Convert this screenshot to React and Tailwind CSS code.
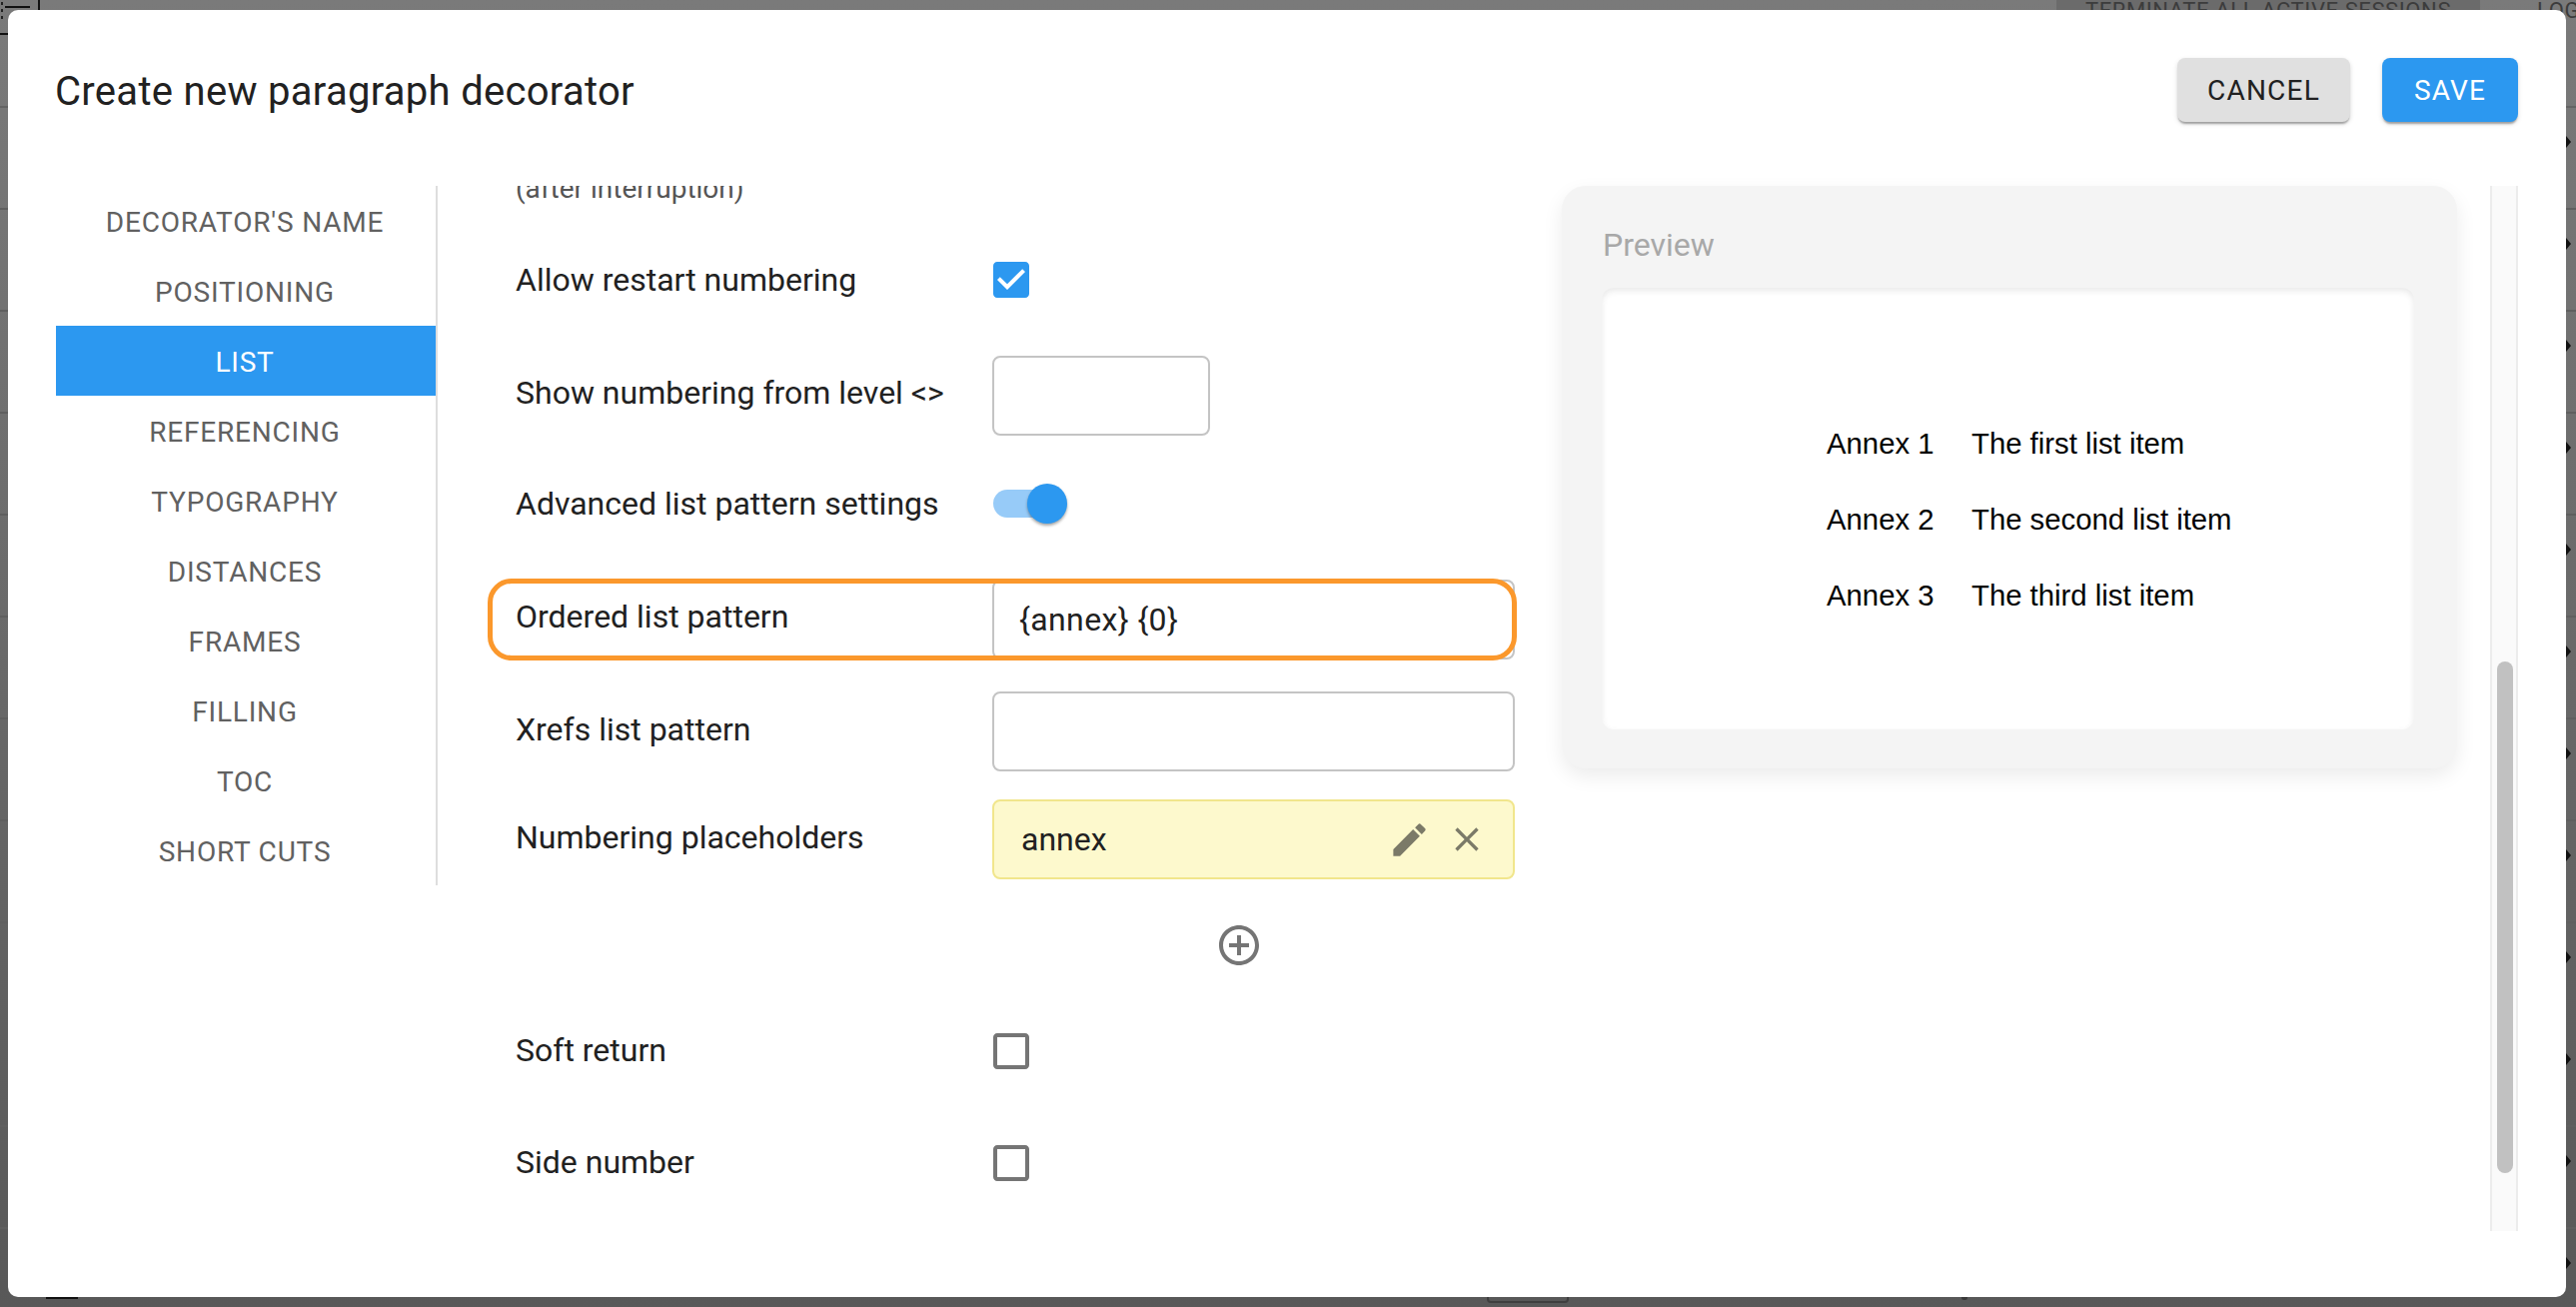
import React from "react";

const NAV = ["DECORATOR'S NAME","POSITIONING","LIST","REFERENCING","TYPOGRAPHY","DISTANCES","FRAMES","FILLING","TOC","SHORT CUTS"];
const ROWS = [0,1,2,3,4,5,6,7,8,9,10,11];

function CheckOn() {
  return (
    <svg viewBox="0 0 24 24" className="w-[48px] h-[48px] -ml-[5px] fill-[#2c98f0]">
      <path d="M19 3H5c-1.11 0-2 .9-2 2v14c0 1.1.89 2 2 2h14c1.11 0 2-.9 2-2V5c0-1.1-.89-2-2-2zm-9 14l-5-5 1.41-1.41L10 14.17l7.59-7.59L19 8l-9 9z" />
    </svg>
  );
}
function CheckOff() {
  return (
    <svg viewBox="0 0 24 24" className="w-[48px] h-[48px] -ml-[5px] fill-[#757575]">
      <path d="M19 5v14H5V5h14m0-2H5c-1.1 0-2 .9-2 2v14c0 1.1.9 2 2 2h14c1.1 0 2-.9 2-2V5c0-1.1-.9-2-2-2z" />
    </svg>
  );
}
function Row({ label, className = "", labelClass = "pb-[5px]", children }) {
  return (
    <div className={"relative flex items-center h-[80px] w-[1000px] " + className}>
      <div className={"w-[477px] shrink-0 text-[32px] leading-[40px] text-[#212121] " + labelClass}>{label}</div>
      {children}
    </div>
  );
}

export default function App() {
  return (
    <div className="relative w-full h-screen overflow-hidden bg-linear-to-b from-[#7a7a7a] to-[#585858] font-['Roboto',sans-serif]">
      {/* page behind the dialog */}
      <div className="absolute inset-0 flex flex-col">
        <div className="flex h-[108px] shrink-0 border-b-2 border-[#646464] pl-[2058px]">
          <div className="shrink-0 -mt-[22px] h-[64px] w-[424px] bg-[#6b6b6b] flex items-center justify-center text-[22px] tracking-[0.6px] text-[#3c3c3c] whitespace-nowrap">TERMINATE ALL ACTIVE SESSIONS</div>
          <div className="shrink-0 -mt-[22px] h-[64px] ml-[57px] flex items-center text-[22px] tracking-[0.6px] text-[#3c3c3c] whitespace-nowrap">LOGOUT</div>
        </div>
        {ROWS.map((r) => (
          <div key={r} className="flex justify-end h-[102px] shrink-0 border-b-2 border-[#5f5f5f] pt-[28px] pr-[5px]">
            <div className="w-0 h-0 border-l-[5px] border-l-[#111] border-y-[6px] border-y-transparent" />
          </div>
        ))}
      </div>
      <svg className="absolute left-0 top-0 w-[50px] h-[40px]" viewBox="0 0 50 40">
        <path d="M5 7h25M39 0v10M0 34h8" stroke="#111" strokeWidth="2" fill="none" />
        <path d="M2 2v3M2 9v3M2 16v3" stroke="#222" strokeWidth="2" fill="none" />
      </svg>
      <div className="absolute left-[46px] top-[1296px] w-[32px] h-[4px] bg-[#111]" />
      <div className="absolute left-[1488px] top-[1290px] w-[82px] h-[14px] border-2 border-[#3f3f3f] rounded-b-[4px]" />
      <div className="absolute left-[1963px] top-[1296px] w-[6px] h-[5px] rounded-full bg-[#3a3a3a]" />

      {/* dialog */}
      <div className="absolute left-[8px] top-[10px] w-[2560px] h-[1288px] rounded-[10px] bg-white overflow-hidden">
        <div className="flex items-center justify-between h-[160px] pl-[47px] pr-[48px]">
          <div className="pt-[3px] text-[40px] leading-[48px] tracking-[0.3px] text-[#212121]">Create new paragraph decorator</div>
          <div className="flex items-center gap-[32px]">
            <div className="flex items-center justify-center w-[173px] h-[64px] pt-[2px] rounded-[8px] bg-[#e0e0e0] text-[28px] tracking-[1.2px] text-[#212121] shadow-[0_3px_2px_-1px_rgba(0,0,0,0.3),0_2px_5px_rgba(0,0,0,0.14)]">CANCEL</div>
            <div className="flex items-center justify-center w-[136px] h-[64px] pt-[2px] rounded-[8px] bg-[#2c98f0] text-[28px] tracking-[1.2px] text-white shadow-[0_3px_2px_-1px_rgba(0,0,0,0.3),0_2px_5px_rgba(0,0,0,0.14)]">SAVE</div>
          </div>
        </div>

        <div className="flex h-[1046px] mt-[16px] pl-[48px]">
          {/* side navigation */}
          <div className="w-[382px] h-[700px] shrink-0 border-r-2 border-[#dedede]">
            {NAV.map((n) => (
              <div key={n} className={"flex items-center justify-center h-[70px] pt-[3px] pr-[2px] text-[28px] tracking-[0.8px] " + (n === "LIST" ? "bg-[#2c98f0] text-white" : "text-[#616161]")}>{n}</div>
            ))}
          </div>

          {/* form */}
          <div className="w-[1125px] shrink-0 pl-[78px] overflow-hidden">
            <div className="h-[54px] overflow-hidden">
              <div className="-mt-[17px] text-[28px] leading-[40px] text-[#555]">(after interruption)</div>
            </div>
            <Row label="Allow restart numbering" labelClass="pb-0"><CheckOn /></Row>
            <Row label="Show numbering from level <>" labelClass="pb-[7px]" className="mt-[36px]">
              <div className="w-[218px] h-[80px] rounded-[8px] border-2 border-[#c4c4c4]" />
            </Row>
            <Row label="Advanced list pattern settings" labelClass="pb-0" className="mt-[28px]">
              <div className="relative w-[68px] h-[28px] rounded-full bg-[#97cbf8] ml-[1px]">
                <div className="absolute left-[34px] -top-[6px] w-[40px] h-[40px] rounded-full bg-[#2c98f0] shadow-[0_2px_3px_rgba(0,0,0,0.35)]" />
              </div>
            </Row>
            <Row label="Ordered list pattern" labelClass="pb-[7px]" className="mt-[36px]">
              <div className="flex items-center w-[523px] h-[80px] pl-[25px] rounded-[8px] border-2 border-[#c4c4c4] text-[32px] tracking-[0.4px] text-[#212121]">{"{annex} {0}"}</div>
              <div className="absolute -left-[28px] -right-[2px] -top-[1px] -bottom-[1px] rounded-[24px] border-[5px] border-[#fb982c]" />
            </Row>
            <Row label="Xrefs list pattern" className="mt-[32px]">
              <div className="w-[523px] h-[80px] rounded-[8px] border-2 border-[#c4c4c4]" />
            </Row>
            <Row label="Numbering placeholders" className="mt-[28px]">
              <div className="flex items-center justify-between w-[523px] h-[80px] pl-[27px] pr-[26px] rounded-[8px] border-2 border-[#f1e68c] bg-[#fdf9cd] text-[32px] text-[#212121]">
                <span>annex</span>
                <div className="flex items-center gap-[16px]">
                  <svg viewBox="0 0 24 24" className="w-[43px] h-[43px] fill-[#7b7a68]">
                    <path d="M3 17.25V21h3.75L17.81 9.94l-3.75-3.75L3 17.25zM20.71 7.04c.39-.39.39-1.02 0-1.41l-2.34-2.34c-.39-.39-1.02-.39-1.41 0l-1.83 1.83 3.75 3.75 1.83-1.83z" />
                  </svg>
                  <svg viewBox="0 0 24 24" className="w-[40px] h-[40px] fill-[#7b7a68]">
                    <path d="M19 6.41L17.59 5 12 10.59 6.41 5 5 6.41 10.59 12 5 17.59 6.41 19 12 13.41 17.59 19 19 17.59 13.41 12z" />
                  </svg>
                </div>
              </div>
            </Row>
            <div className="h-[48px] mt-[42px] pl-[700px]">
              <svg viewBox="0 0 24 24" className="w-[48px] h-[48px] fill-[#757575]">
                <path d="M13 7h-2v4H7v2h4v4h2v-4h4v-2h-4V7zm-1-5C6.48 2 2 6.48 2 12s4.48 10 10 10 10-4.48 10-10S17.52 2 12 2zm0 18c-4.41 0-8-3.59-8-8s3.59-8 8-8 8 3.59 8 8-3.59 8-8 8z" />
              </svg>
            </div>
            <Row label="Soft return" labelClass="pb-[2px]" className="mt-[42px]"><CheckOff /></Row>
            <Row label="Side number" labelClass="pb-[2px]" className="mt-[32px]"><CheckOff /></Row>
          </div>

          {/* preview */}
          <div className="w-[896px] h-[583px] shrink-0 rounded-[24px] bg-[#f4f4f4] px-[40px] pt-[40px] shadow-[0_8px_20px_rgba(0,0,0,0.08)]">
            <div className="h-[38px] flex items-center pl-[1px] text-[32px] text-[#a8a8a8]">Preview</div>
            <div className="mt-[24px] w-[813px] h-[442px] rounded-[12px] bg-white pt-[118px] pl-[225px] shadow-[inset_0_3px_6px_rgba(0,0,0,0.09)] font-['Liberation_Sans',sans-serif] text-[29.3px] leading-[76px] text-black">
              <div className="flex"><span className="w-[145px]">Annex 1</span><span>The first list item</span></div>
              <div className="flex"><span className="w-[145px]">Annex 2</span><span>The second list item</span></div>
              <div className="flex"><span className="w-[145px]">Annex 3</span><span>The third list item</span></div>
            </div>
          </div>

          {/* scrollbar */}
          <div className="ml-[33px] w-[28px] h-[1046px] shrink-0 border-x-2 border-[#ececec] bg-[#fafafa] pt-[476px] pl-[5px]">
            <div className="w-[16px] h-[512px] rounded-full bg-[#c1c1c1]" />
          </div>
        </div>
      </div>
    </div>
  );
}
